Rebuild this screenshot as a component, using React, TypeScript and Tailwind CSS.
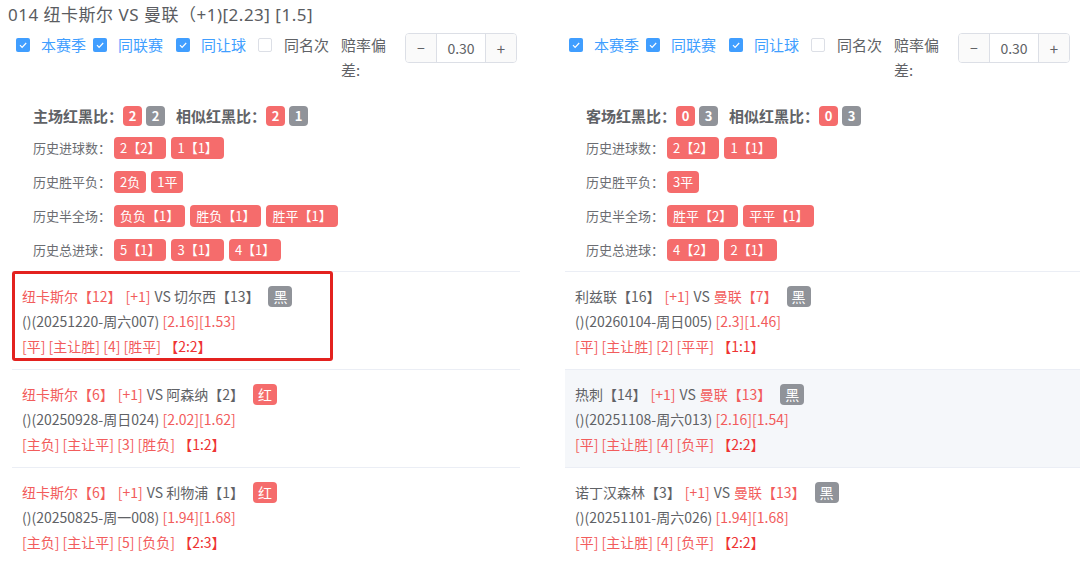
import React from 'react';

type Seg = { t: string; red?: boolean };

type Match = {
  line1: Seg[];
  result: '黑' | '红';
  date: string;
  odds: string;
  tail: string;
  score: string;
  hover?: boolean;
  marked?: boolean;
};

type Side = {
  title?: string;
  ratioLabel: string;
  ratio: [number, number];
  similar: [number, number];
  rows: [string, string[]][];
  matches: Match[];
};

const leftSide: Side = {
  title: '014 纽卡斯尔 VS 曼联（+1)[2.23] [1.5]',
  ratioLabel: '主场红黑比：',
  ratio: [2, 2],
  similar: [2, 1],
  rows: [
    ['历史进球数：', ['2【2】', '1【1】']],
    ['历史胜平负：', ['2负', '1平']],
    ['历史半全场：', ['负负【1】', '胜负【1】', '胜平【1】']],
    ['历史总进球：', ['5【1】', '3【1】', '4【1】']],
  ],
  matches: [
    {
      line1: [{ t: '纽卡斯尔【12】', red: true }, { t: '[+1]', red: true }, { t: 'VS 切尔西【13】' }],
      result: '黑',
      date: '()(20251220-周六007)',
      odds: '[2.16][1.53]',
      tail: '[平] [主让胜] [4] [胜平]',
      score: '【2:2】',
      marked: true,
    },
    {
      line1: [{ t: '纽卡斯尔【6】', red: true }, { t: '[+1]', red: true }, { t: 'VS 阿森纳【2】' }],
      result: '红',
      date: '()(20250928-周日024)',
      odds: '[2.02][1.62]',
      tail: '[主负] [主让平] [3] [胜负]',
      score: '【1:2】',
    },
    {
      line1: [{ t: '纽卡斯尔【6】', red: true }, { t: '[+1]', red: true }, { t: 'VS 利物浦【1】' }],
      result: '红',
      date: '()(20250825-周一008)',
      odds: '[1.94][1.68]',
      tail: '[主负] [主让平] [5] [负负]',
      score: '【2:3】',
    },
  ],
};

const rightSide: Side = {
  ratioLabel: '客场红黑比：',
  ratio: [0, 3],
  similar: [0, 3],
  rows: [
    ['历史进球数：', ['2【2】', '1【1】']],
    ['历史胜平负：', ['3平']],
    ['历史半全场：', ['胜平【2】', '平平【1】']],
    ['历史总进球：', ['4【2】', '2【1】']],
  ],
  matches: [
    {
      line1: [{ t: '利兹联【16】' }, { t: '[+1]', red: true }, { t: 'VS' }, { t: '曼联【7】', red: true }],
      result: '黑',
      date: '()(20260104-周日005)',
      odds: '[2.3][1.46]',
      tail: '[平] [主让胜] [2] [平平]',
      score: '【1:1】',
    },
    {
      line1: [{ t: '热刺【14】' }, { t: '[+1]', red: true }, { t: 'VS' }, { t: '曼联【13】', red: true }],
      result: '黑',
      date: '()(20251108-周六013)',
      odds: '[2.16][1.54]',
      tail: '[平] [主让胜] [4] [负平]',
      score: '【2:2】',
      hover: true,
    },
    {
      line1: [{ t: '诺丁汉森林【3】' }, { t: '[+1]', red: true }, { t: 'VS' }, { t: '曼联【13】', red: true }],
      result: '黑',
      date: '()(20251101-周六026)',
      odds: '[1.94][1.68]',
      tail: '[平] [主让胜] [4] [负平]',
      score: '【2:2】',
    },
  ],
};

function Check({ on }: { on: boolean }) {
  return on ? (
    <span className="mt-[6px] flex h-[14px] w-[14px] shrink-0 items-center justify-center rounded-[2px] bg-[#409eff]">
      <svg viewBox="0 0 14 14" className="h-[14px] w-[14px]">
        <path d="M4 7.2l2.1 2.1L10.2 5" fill="none" stroke="white" strokeWidth="1.2" />
      </svg>
    </span>
  ) : (
    <span className="mt-[6px] h-[14px] w-[14px] shrink-0 rounded-[2px] border border-[#dcdfe6] bg-white" />
  );
}

function Controls() {
  return (
    <div className="flex items-start pl-[16px] pt-[2px] text-[15px] leading-[25px]">
      <Check on />
      <span className="ml-[11px] w-[47px] text-[#409eff]">本赛季</span>
      <span className="ml-[5px] flex"><Check on /></span>
      <span className="ml-[11px] w-[46px] text-[#409eff]">同联赛</span>
      <span className="ml-[12px] flex"><Check on /></span>
      <span className="ml-[11px] w-[46px] text-[#409eff]">同让球</span>
      <span className="ml-[11px] flex"><Check on={false} /></span>
      <span className="ml-[12px] w-[46px] text-[#606266]">同名次</span>
      <span className="ml-[11px] w-[46px] text-[#606266]">赔率偏差:</span>
      <div className="ml-[18px] mt-[1px] flex h-[30px] w-[112px] overflow-hidden rounded-[4px] border border-[#dcdfe6] text-[#606266]">
        <span className="flex w-[31px] items-center justify-center border-r border-[#dcdfe6] bg-[#fafafa] text-[14px]">−</span>
        <span className="flex flex-1 items-center justify-center text-[14px]">0.30</span>
        <span className="flex w-[31px] items-center justify-center border-l border-[#dcdfe6] bg-[#fafafa] text-[15px]">+</span>
      </div>
    </div>
  );
}

function Badge({ n, red }: { n: number; red: boolean }) {
  return (
    <span
      className={
        'flex h-[20px] w-[19px] items-center justify-center rounded-[4px] text-[13px] font-bold text-white ' +
        (red ? 'bg-[#f56c6c]' : 'bg-[#909399]')
      }
    >
      {n}
    </span>
  );
}

function Stats({ side }: { side: Side }) {
  return (
    <div className="mt-[24px] mb-[10px] pl-[33px]">
      <div className="flex h-[20px] items-center text-[15px] font-bold text-[#606266]">
        <span>{side.ratioLabel}</span>
        <div className="flex gap-[4px]">
          <Badge n={side.ratio[0]} red />
          <Badge n={side.ratio[1]} red={false} />
        </div>
        <span className="ml-[11px]">相似红黑比：</span>
        <div className="flex gap-[4px]">
          <Badge n={side.similar[0]} red />
          <Badge n={side.similar[1]} red={false} />
        </div>
      </div>
      <div className="mt-[11px] flex flex-col gap-[12px]">
        {side.rows.map(([label, tags]) => (
          <div key={label} className="flex h-[22px] items-center">
            <span className="w-[81px] text-[13px] text-[#6b6d72]">{label}</span>
            <div className="flex gap-[5px]">
              {tags.map((t, i) => (
                <span
                  key={i}
                  className="flex h-[22px] items-center rounded-[4px] bg-[#f56c6c] px-[6px] text-[13px] text-white"
                >
                  {t}
                </span>
              ))}
            </div>
          </div>
        ))}
      </div>
    </div>
  );
}

function MatchItem({ m }: { m: Match }) {
  return (
    <div
      className={
        'relative border-t border-[#ebeef5] pl-[10px] pt-[12px] pb-[10px] text-[14px] leading-[25px] ' +
        (m.hover ? 'bg-[#f5f7fa]' : '')
      }
    >
      <div className="flex h-[25px] items-center">
        <span className="flex gap-[4px]">
          {m.line1.map((s, i) => (
            <span key={i} className={s.red ? 'text-[#f25c5c]' : 'text-[#606266]'}>
              {s.t}
            </span>
          ))}
        </span>
        <span
          className={
            'ml-[9px] flex h-[21px] items-center rounded-[4px] px-[5px] text-[14px] text-white ' +
            (m.result === '红' ? 'bg-[#f56c6c]' : 'bg-[#909399]')
          }
        >
          {m.result}
        </span>
      </div>
      <div className="h-[25px]">
        <span className="text-[#606266]">{m.date}</span>{' '}
        <span className="text-[#f25c5c]">{m.odds}</span>
      </div>
      <div className="h-[25px] text-[#f25c5c]">
        {m.tail} <span className="text-[#ee3333]">{m.score}</span>
      </div>
      {m.marked && (
        <div className="absolute -top-px left-0 h-[90px] w-[321px] rounded-[3px] border-[3px] border-[#e3221f]" />
      )}
    </div>
  );
}

function Column({ side, className }: { side: Side; className: string }) {
  return (
    <div className={className}>
      <div className="h-[30px] whitespace-nowrap pl-[8px] font-['Noto_Sans','Noto_Sans_CJK_SC',sans-serif] text-[17px] leading-[30px] tracking-[0.5px] text-[#5a5c61]">
        {side.title}
      </div>
      <Controls />
      <Stats side={side} />
      <div className="ml-[12px]">
        {side.matches.map((m, i) => (
          <MatchItem key={i} m={m} />
        ))}
      </div>
    </div>
  );
}

export default function App() {
  return (
    <div className="flex h-[562px] w-[1080px] overflow-hidden bg-white font-['Noto_Sans_CJK_SC','Noto_Sans',sans-serif]">
      <Column side={leftSide} className="w-[553px] shrink-0 pr-[33px]" />
      <Column side={rightSide} className="flex-1 -mr-[10px]" />
    </div>
  );
}
